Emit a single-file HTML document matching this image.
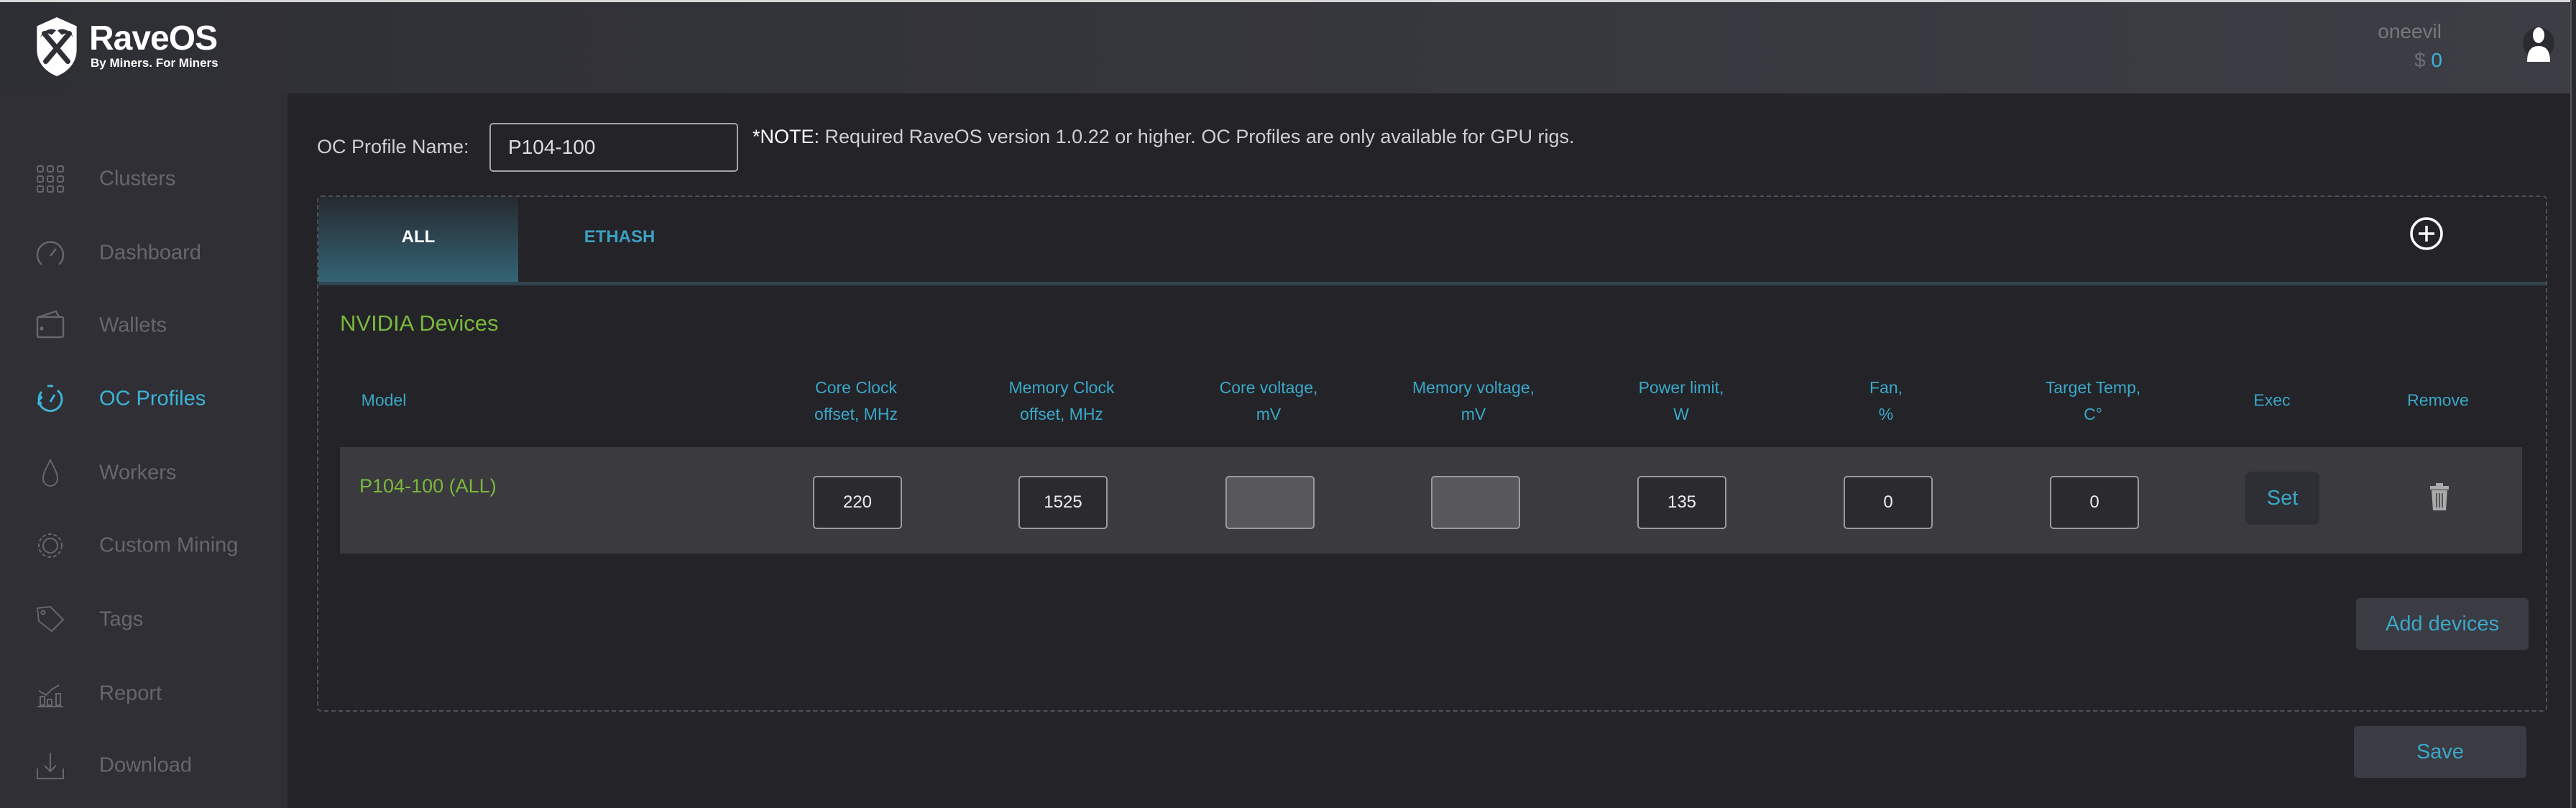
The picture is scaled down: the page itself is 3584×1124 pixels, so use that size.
<!DOCTYPE html>
<html><head><meta charset="utf-8"><style>
*{margin:0;padding:0;box-sizing:border-box}
body{width:3584px;height:1124px;overflow:hidden;background:#232328;font-family:"Liberation Sans",sans-serif;position:relative}
.a{position:absolute}
.top{left:0;top:0;width:3584px;height:3px;background:#d8d8d8}
.hdr{left:0;top:3px;width:3576px;height:127px;background:linear-gradient(90deg,#2e2f34,#3d3e45)}
.rb{left:3576px;top:0;width:8px;height:1124px;background:#2a2a2e;border-left:2px solid #55565c}
.side{left:0;top:130px;width:400px;height:994px;background:#2f2f35}
.nav{left:138px;font-size:29px;color:#66676d;transform:translateY(-50%)}
.ic{left:48px;width:44px;height:44px;transform:translateY(-50%)}
.th{color:#3aa8c8;font-size:23px;text-align:center;line-height:37px;transform:translate(-50%,-50%);white-space:nowrap}
.inp{width:124px;height:74px;border:2px solid #9a9a9e;border-radius:5px;background:#2a2a2f;color:#eee;font-size:24px;text-align:center;line-height:70px;top:662px;transform:translateX(-50%)}
.dis{background:#58585c}
.btn{background:#3b3b44;border-radius:5px;color:#3aa8c8;font-size:29px;text-align:center}
</style></head><body>
<div class="a top"></div>
<div class="a hdr"></div>
<div class="a rb"></div>
<div class="a side"></div>

<svg class="a" style="left:46px;top:22px" width="66" height="86" viewBox="0 0 62 84">
<path d="M31 2 L58 14 L58 46 C58 64 46 76 31 82 C16 76 4 64 4 46 L4 14 Z" fill="#fff"/>
<g stroke="#2f3035" stroke-width="7" stroke-linecap="round"><path d="M14 24 L46 62"/><path d="M48 24 L16 62"/></g>
<path d="M8 30 C14 18 24 16 30 20 L24 26 C18 22 12 24 8 30Z" fill="#2f3035"/>
<path d="M54 30 C48 18 38 16 32 20 L38 26 C44 22 50 24 54 30Z" fill="#2f3035"/>
</svg>
<div class="a" style="left:124px;top:26px;font-size:48px;font-weight:bold;color:#fff;letter-spacing:-1px">RaveOS</div>
<div class="a" style="left:126px;top:78px;font-size:17px;font-weight:bold;color:#fff">By Miners. For Miners</div>

<div class="a" style="right:187px;top:28px;font-size:28px;color:#77787e">oneevil</div>
<div class="a" style="right:186px;top:68px;font-size:28px;color:#6d6e73">$ <span style="color:#3cb4e0">0</span></div>
<svg class="a" style="left:3510px;top:36px" width="44" height="52" viewBox="0 0 44 52">
<circle cx="22" cy="24" r="22" fill="#2a2b30"/>
<ellipse cx="22" cy="13" rx="8" ry="11" fill="#fff"/><path d="M6 50 C6 34 12 28 22 28 C32 28 38 34 38 50 Z" fill="#fff"/></svg>

<svg class="a ic" style="top:249px" viewBox="0 0 44 44" fill="none" stroke="#66676d" stroke-width="2"><g>
<rect x="4" y="4" width="8" height="8" rx="2"/><rect x="18" y="4" width="8" height="8" rx="2"/><rect x="32" y="4" width="8" height="8" rx="2"/>
<rect x="4" y="18" width="8" height="8" rx="2"/><rect x="18" y="18" width="8" height="8" rx="2"/><rect x="32" y="18" width="8" height="8" rx="2"/>
<rect x="4" y="32" width="8" height="8" rx="2"/><rect x="18" y="32" width="8" height="8" rx="2"/><rect x="32" y="32" width="8" height="8" rx="2"/></g></svg>
<div class="a nav" style="top:249px">Clusters</div>
<svg class="a ic" style="top:352px" viewBox="0 0 44 44" fill="none" stroke="#66676d" stroke-width="2.5"><path d="M10 38 A18 18 0 1 1 34 38"/><path d="M22 26 L30 16"/></svg>
<div class="a nav" style="top:352px">Dashboard</div>
<svg class="a ic" style="top:453px" viewBox="0 0 44 44" fill="none" stroke="#66676d" stroke-width="2.5"><rect x="4" y="10" width="36" height="28" rx="2"/><path d="M6 10 L30 2 L34 10"/><circle cx="10" cy="26" r="1.5" fill="#66676d"/></svg>
<div class="a nav" style="top:453px">Wallets</div>
<svg class="a ic" style="top:555px" viewBox="0 0 44 44" fill="none" stroke="#3cb4d8" stroke-width="3"><path d="M32 10 A16 16 0 1 1 10 12" /><path d="M22 26 L28 16"/><path d="M18 4 L26 4"/><circle cx="8" cy="20" r="1.5" fill="#3cb4d8"/><circle cx="7" cy="28" r="1.5" fill="#3cb4d8"/></svg>
<div class="a nav" style="top:555px;color:#3cb4d8">OC Profiles</div>
<svg class="a ic" style="top:658px" viewBox="0 0 44 44" fill="none" stroke="#66676d" stroke-width="2"><path d="M22 4 C16 16 12 22 12 30 A10 10 0 0 0 32 30 C32 22 28 16 22 4Z"/></svg>
<div class="a nav" style="top:658px">Workers</div>
<svg class="a ic" style="top:759px" viewBox="0 0 44 44" fill="none" stroke="#66676d" stroke-width="2"><circle cx="22" cy="22" r="10"/><circle cx="22" cy="22" r="16" stroke-dasharray="5 3"/></svg>
<div class="a nav" style="top:759px">Custom Mining</div>
<svg class="a ic" style="top:862px" viewBox="0 0 44 44" fill="none" stroke="#66676d" stroke-width="2"><path d="M4 6 L22 4 L40 22 L24 38 L6 24 Z"/><circle cx="12" cy="12" r="2.5"/></svg>
<div class="a nav" style="top:862px">Tags</div>
<svg class="a ic" style="top:965px" viewBox="0 0 44 44" fill="none" stroke="#66676d" stroke-width="2"><path d="M4 40 L40 40"/><rect x="8" y="26" width="6" height="12"/><rect x="18" y="30" width="6" height="8"/><rect x="30" y="22" width="6" height="16"/><path d="M6 18 L16 24 L24 16 L34 10"/></svg>
<div class="a nav" style="top:965px">Report</div>
<svg class="a ic" style="top:1065px" viewBox="0 0 44 44" fill="none" stroke="#66676d" stroke-width="2"><path d="M4 26 L4 40 L40 40 L40 26"/><path d="M22 4 L22 30 M14 22 L22 30 L30 22"/></svg>
<div class="a nav" style="top:1065px">Download</div>

<div class="a" style="left:441px;top:189px;font-size:27px;color:#cfcfd2">OC Profile Name:</div>
<div class="a" style="left:681px;top:171px;width:346px;height:68px;border:2px solid #a5a5a8;border-radius:5px;background:#232328;color:#ddd;font-size:28px;line-height:64px;padding-left:24px">P104-100</div>
<div class="a" style="left:1047px;top:175px;font-size:27px;color:#cfcfd2"><span style="color:#fff">*NOTE:</span> Required RaveOS version 1.0.22 or higher. OC Profiles are only available for GPU rigs.</div>

<div class="a" style="left:441px;top:272px;width:3103px;height:718px;border:2px dashed #505158;border-radius:6px"></div>
<div class="a" style="left:443px;top:274px;width:278px;height:118px;background:linear-gradient(#262a30,#346475)"></div>
<div class="a" style="left:443px;top:392px;width:3099px;height:5px;background:#2f4550"></div>
<div class="a" style="left:443px;top:316px;width:278px;text-align:center;color:#fff;font-weight:bold;font-size:24px">ALL</div>
<div class="a" style="left:760px;top:316px;width:204px;text-align:center;color:#3ca0c0;font-weight:bold;font-size:24px">ETHASH</div>
<svg class="a" style="left:3352px;top:301px" width="48" height="48" viewBox="0 0 48 48"><circle cx="24" cy="24" r="21" fill="none" stroke="#fff" stroke-width="3.5"/><path d="M24 13 V35 M13 24 H35" stroke="#fff" stroke-width="3.5"/></svg>

<div class="a" style="left:473px;top:432px;font-size:31px;color:#7ab83a">NVIDIA Devices</div>

<div class="a th" style="left:534px;top:557px">Model</div>
<div class="a th" style="left:1191px;top:558px">Core Clock<br>offset, MHz</div>
<div class="a th" style="left:1477px;top:558px">Memory Clock<br>offset, MHz</div>
<div class="a th" style="left:1765px;top:558px">Core voltage,<br>mV</div>
<div class="a th" style="left:2050px;top:558px">Memory voltage,<br>mV</div>
<div class="a th" style="left:2339px;top:558px">Power limit,<br>W</div>
<div class="a th" style="left:2624px;top:558px">Fan,<br>%</div>
<div class="a th" style="left:2912px;top:558px">Target Temp,<br>C°</div>
<div class="a th" style="left:3161px;top:557px">Exec</div>
<div class="a th" style="left:3392px;top:557px">Remove</div>

<div class="a" style="left:473px;top:622px;width:3036px;height:148px;background:#3a3a3f"></div>
<div class="a" style="left:500px;top:661px;font-size:27px;color:#7ab83a">P104-100 (ALL)</div>
<div class="a inp" style="left:1193px">220</div>
<div class="a inp" style="left:1479px">1525</div>
<div class="a inp dis" style="left:1767px"></div>
<div class="a inp dis" style="left:2053px"></div>
<div class="a inp" style="left:2340px">135</div>
<div class="a inp" style="left:2627px">0</div>
<div class="a inp" style="left:2914px">0</div>
<div class="a" style="left:3124px;top:656px;width:103px;height:74px;background:#2e2f35;border-radius:8px;color:#3aa8c8;font-size:29px;text-align:center;line-height:74px">Set</div>
<svg class="a" style="left:3380px;top:672px" width="28" height="38" viewBox="0 0 28 38"><rect x="1" y="4" width="26" height="5" fill="#aaa"/><rect x="9" y="0" width="10" height="5" fill="#aaa"/><path d="M3 10 H25 L23 38 H5 Z" fill="#aaa"/><path d="M10 14 V34 M14 14 V34 M18 14 V34" stroke="#3a3a3f" stroke-width="1.5"/></svg>

<div class="a btn" style="left:3278px;top:832px;width:240px;height:72px;line-height:72px">Add devices</div>
<div class="a btn" style="left:3275px;top:1010px;width:240px;height:72px;line-height:72px">Save</div>
</body></html>
